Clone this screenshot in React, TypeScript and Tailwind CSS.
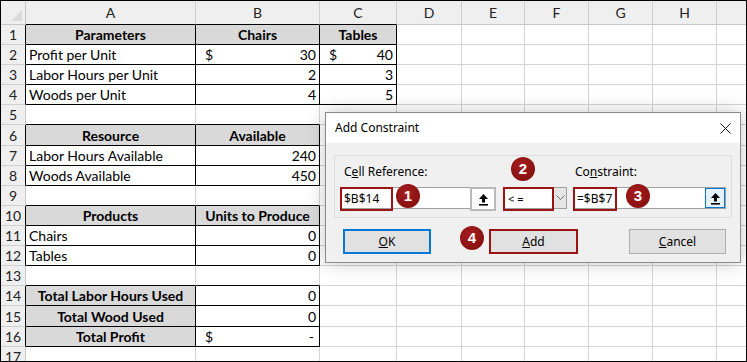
import React from "react";

const COLS = [
  { key: "A", w: 170 },
  { key: "B", w: 124 },
  { key: "C", w: 77 },
  { key: "D", w: 65 },
  { key: "E", w: 63 },
  { key: "F", w: 64 },
  { key: "G", w: 64 },
  { key: "H", w: 64 },
  { key: "", w: 40 },
];

type Cell = { text?: string; dollar?: boolean; align?: "left" | "right" | "center"; bold?: boolean };

const DATA: Record<number, Record<number, Cell>> = {
  1: { 0: { text: "Parameters", bold: true, align: "center" }, 1: { text: "Chairs", bold: true, align: "center" }, 2: { text: "Tables", bold: true, align: "center" } },
  2: { 0: { text: "Profit per Unit" }, 1: { text: "30", dollar: true, align: "right" }, 2: { text: "40", dollar: true, align: "right" } },
  3: { 0: { text: "Labor Hours per Unit" }, 1: { text: "2", align: "right" }, 2: { text: "3", align: "right" } },
  4: { 0: { text: "Woods per Unit" }, 1: { text: "4", align: "right" }, 2: { text: "5", align: "right" } },
  6: { 0: { text: "Resource", bold: true, align: "center" }, 1: { text: "Available", bold: true, align: "center" } },
  7: { 0: { text: "Labor Hours Available" }, 1: { text: "240", align: "right" } },
  8: { 0: { text: "Woods Available" }, 1: { text: "450", align: "right" } },
  10: { 0: { text: "Products", bold: true, align: "center" }, 1: { text: "Units to Produce", bold: true, align: "center" } },
  11: { 0: { text: "Chairs" }, 1: { text: "0", align: "right" } },
  12: { 0: { text: "Tables" }, 1: { text: "0", align: "right" } },
  14: { 0: { text: "Total Labor Hours Used", bold: true, align: "center" }, 1: { text: "0", align: "right" } },
  15: { 0: { text: "Total Wood Used", bold: true, align: "center" }, 1: { text: "0", align: "right" } },
  16: { 0: { text: "Total Profit", bold: true, align: "center" }, 1: { text: "-", dollar: true, align: "right" } },
};

// a couple of rows are a pixel taller in the sheet
const ROW_H: Record<number, number> = { 6: 21, 15: 21 };

function bordered(r: number, c: number) {
  if (c < 0) return false;
  if (r >= 1 && r <= 4) return c <= 2;
  if ((r >= 6 && r <= 8) || (r >= 10 && r <= 12) || (r >= 14 && r <= 16)) return c <= 1;
  return false;
}

function filled(r: number, c: number) {
  if (r === 1) return c <= 2;
  if (r === 6 || r === 10) return c <= 1;
  if (r >= 14 && r <= 16) return c === 0;
  return false;
}

function UpArrow() {
  return (
    <svg width="11" height="13" viewBox="0 0 11 13">
      <path d="M5.5 1 L10 6 L7 6 L7 9.5 L4 9.5 L4 6 L1 6 Z" fill="#000" />
      <rect x="1" y="11" width="9" height="1.6" fill="#000" />
    </svg>
  );
}

function Badge({ n }: { n: number }) {
  return (
    <div className="absolute w-[24px] h-[24px] -translate-x-1/2 -translate-y-1/2 rounded-full bg-[radial-gradient(circle_at_40%_35%,#a51d1d,#7e0c0c)] text-white flex items-center justify-center text-[15px] font-bold font-['Liberation_Sans',sans-serif] pt-px">
      {n}
    </div>
  );
}

function Btn({ children, tone }: { children: React.ReactNode; tone: "blue" | "red" | "gray" }) {
  const cls =
    tone === "blue"
      ? "border-2 border-[#0078d7]"
      : tone === "red"
      ? "border-2 border-[#9b1313]"
      : "border border-[#adadad]";
  return <div className={`h-[25px] bg-[#e1e1e1] flex items-center justify-center text-[12px] ${cls}`}>{children}</div>;
}

function Dialog() {
  return (
    <div className="absolute left-[324px] top-[111px] w-[416px] h-[151px] bg-[#f0f0f0] border border-[#8a8a8a] shadow-[0_0_18px_rgba(0,0,0,0.22)] font-['Noto_Sans',sans-serif] text-black">
      {/* title bar */}
      <div className="h-[30px] bg-white flex items-center justify-between pl-[9px] pr-[9px]">
        <span className="text-[12px]">Add Constraint</span>
        <svg width="11" height="11" viewBox="0 0 11 11">
          <path d="M0.5 0.5 L10.5 10.5 M10.5 0.5 L0.5 10.5" stroke="#111" strokeWidth="1" />
        </svg>
      </div>
      {/* group box */}
      <div className="mx-[8px] mt-[12px] h-[63px] border border-[#dcdcdc] px-[5px] pt-[9px] flex">
        <div className="w-[156px]">
          <div className="text-[12px] leading-[14px] mb-[8px] pl-[4px]">
            C<span className="underline">e</span>ll Reference:
          </div>
          <div className="h-[22px] bg-white border border-[#a0a0a0] flex">
            <div className="w-[47px] h-full border-2 border-[#9b1313] flex items-center pl-[2px] text-[12px] -ml-px -mt-px box-content">$B$14</div>
            <div className="flex-1" />
            <div className="w-[22px] h-full border-2 border-[#b9b9b9] bg-white flex items-center justify-center -mt-px -mr-px box-content">
              <UpArrow />
            </div>
          </div>
        </div>
        <div className="w-[64px] ml-[7px] pt-[22px]">
          <div className="h-[22px] bg-white border border-[#a0a0a0] flex">
            <div className="w-[44px] h-full border-2 border-[#9b1313] flex items-center pl-[3px] text-[11px] -ml-px -mt-px box-content">&lt; =</div>
            <div className="flex-1 bg-[#e5e5e5] flex items-center justify-center">
              <svg width="9" height="6" viewBox="0 0 9 6">
                <path d="M0.5 0.5 L4.5 4.5 L8.5 0.5" stroke="#707070" fill="none" strokeWidth="1" />
              </svg>
            </div>
          </div>
        </div>
        <div className="w-[153px] ml-[6px]">
          <div className="text-[12px] leading-[14px] mb-[8px] pl-[2px]">
            Co<span className="underline">n</span>straint:
          </div>
          <div className="h-[22px] bg-white border border-[#a0a0a0] flex">
            <div className="w-[38px] h-full border-2 border-[#9b1313] flex items-center pl-[2px] text-[12px] -ml-px -mt-px box-content">=$B$7</div>
            <div className="flex-1" />
            <div className="w-[20px] h-full border border-[#0078d7] bg-[#e5f1fb] flex items-center justify-center">
              <UpArrow />
            </div>
          </div>
        </div>
      </div>
      {/* buttons */}
      <div className="flex mt-[11px] pl-[17px]">
        <div className="w-[88px]">
          <Btn tone="blue">
            <span className="underline">O</span>K
          </Btn>
        </div>
        <div className="w-[89px] ml-[58px]">
          <Btn tone="red">
            <span className="underline">A</span>dd
          </Btn>
        </div>
        <div className="w-[97px] ml-[51px]">
          <Btn tone="gray">
            <span className="underline">C</span>ancel
          </Btn>
        </div>
      </div>
      <div className="absolute left-[82px] top-[83px]"><Badge n={1} /></div>
      <div className="absolute left-[197px] top-[56px]"><Badge n={2} /></div>
      <div className="absolute left-[312px] top-[83px]"><Badge n={3} /></div>
      <div className="absolute left-[146px] top-[125px]"><Badge n={4} /></div>
    </div>
  );
}

export default function App() {
  const rows = Array.from({ length: 17 }, (_, i) => i + 1);
  return (
    <div className="relative w-[747px] h-[362px] overflow-hidden border border-black bg-white font-['Lato',sans-serif] text-[14px] text-black">
      {/* column headers */}
      <div className="flex h-[24px] bg-[#efefef]">
        <div className="w-[25px] shrink-0 border-r border-b border-[#c6c6c6] relative">
          <div className="absolute right-[3px] bottom-[3px] w-0 h-0 border-l-[11px] border-l-transparent border-b-[11px] border-b-[#dadada]" />
        </div>
        {COLS.map((col, c) => (
          <div
            key={c}
            style={{ width: col.w }}
            className={`shrink-0 flex items-center justify-center text-[14px] text-[#222] border-r border-[#d0d0d0] border-b ${bordered(1, c) ? "border-b-black" : "border-b-[#c6c6c6]"}`}
          >
            {col.key}
          </div>
        ))}
      </div>
      {rows.map((r) => (
        <div key={r} className="flex" style={{ height: ROW_H[r] ?? 20 }}>
          <div
            className={`w-[25px] shrink-0 bg-[#efefef] flex items-center justify-center text-[14px] text-[#222] border-b border-b-[#d0d0d0] border-r ${bordered(r, 0) ? "border-r-black" : "border-r-[#c6c6c6]"}`}
          >
            {r}
          </div>
          {COLS.map((col, c) => {
            const cell = DATA[r]?.[c];
            const rightBlack = bordered(r, c) || bordered(r, c + 1);
            const bottomBlack = bordered(r, c) || bordered(r + 1, c);
            return (
              <div
                key={c}
                style={{ width: col.w }}
                className={`shrink-0 flex items-center px-[3px] border-r border-b whitespace-nowrap overflow-hidden ${rightBlack ? "border-r-black" : "border-r-[#d4d4d4]"} ${bottomBlack ? "border-b-black" : "border-b-[#d4d4d4]"} ${filled(r, c) ? "bg-[#d9d9d9]" : ""} ${cell?.bold ? "font-bold" : ""} ${cell?.align === "center" ? "justify-center" : cell?.align === "right" ? "justify-end" : "justify-start"}`}
              >
                {cell?.dollar && <span className="mr-auto pl-[6px]">$</span>}
                {cell?.text && <span className={cell.text === "-" ? "pr-[2px]" : ""}>{cell.text}</span>}
              </div>
            );
          })}
        </div>
      ))}
      <Dialog />
    </div>
  );
}
